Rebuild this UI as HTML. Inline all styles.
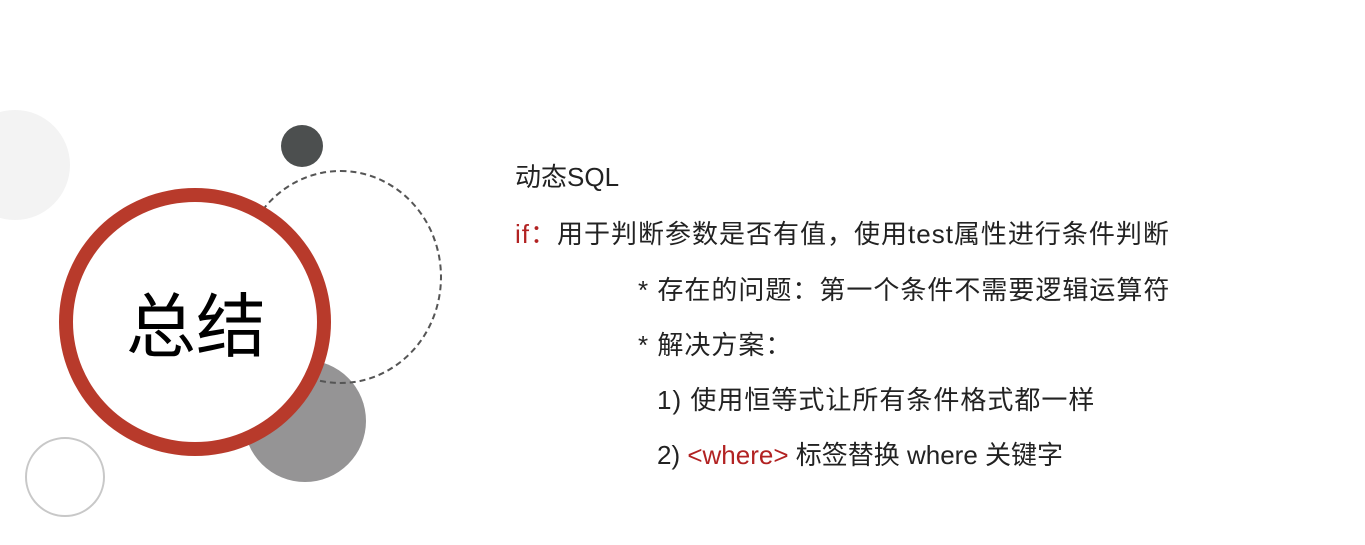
<!DOCTYPE html>
<html><head><meta charset="utf-8"><style>
html,body{margin:0;padding:0;background:#fff;}
body{width:1365px;height:545px;position:relative;overflow:hidden;font-family:"Liberation Sans","Noto Sans CJK SC",sans-serif;color:#222;}
.c{position:absolute;border-radius:50%;box-sizing:border-box;}
.t{position:absolute;font-size:26px;line-height:30px;white-space:nowrap;letter-spacing:1px;}
.r{color:#b22222;}
</style></head><body>
<div class="c" style="left:-40px;top:110px;width:110px;height:110px;background:#f3f3f3;"></div>
<div class="c" style="left:281px;top:125px;width:42px;height:42px;background:#4c4f4f;"></div>
<div class="c" style="left:244px;top:360px;width:122px;height:122px;background:#959495;"></div>
<div class="c" style="left:239px;top:170px;width:203px;height:214px;border:2px dashed #555;"></div>
<div class="c" style="left:59px;top:188px;width:272px;height:268px;border:14px solid #b83a2b;background:#fff;"></div>
<div class="c" style="left:25px;top:437px;width:80px;height:80px;border:2px solid #c8c8c8;"></div>
<div class="t" style="left:126px;top:287px;font-size:70px;line-height:80px;color:#000;letter-spacing:0;">总结</div>
<div class="t" style="left:515px;top:162px;letter-spacing:0;">动态SQL</div>
<div class="t" style="left:515px;top:219px;"><span class="r">if：</span>用于判断参数是否有值，使用test属性进行条件判断</div>
<div class="t" style="left:638px;top:275px;">* 存在的问题：第一个条件不需要逻辑运算符</div>
<div class="t" style="left:638px;top:330px;">* 解决方案：</div>
<div class="t" style="left:657px;top:385px;">1) 使用恒等式让所有条件格式都一样</div>
<div class="t" style="left:657px;top:440px;letter-spacing:0;">2) <span class="r">&lt;where&gt;</span> 标签替换 where 关键字</div>
</body></html>
